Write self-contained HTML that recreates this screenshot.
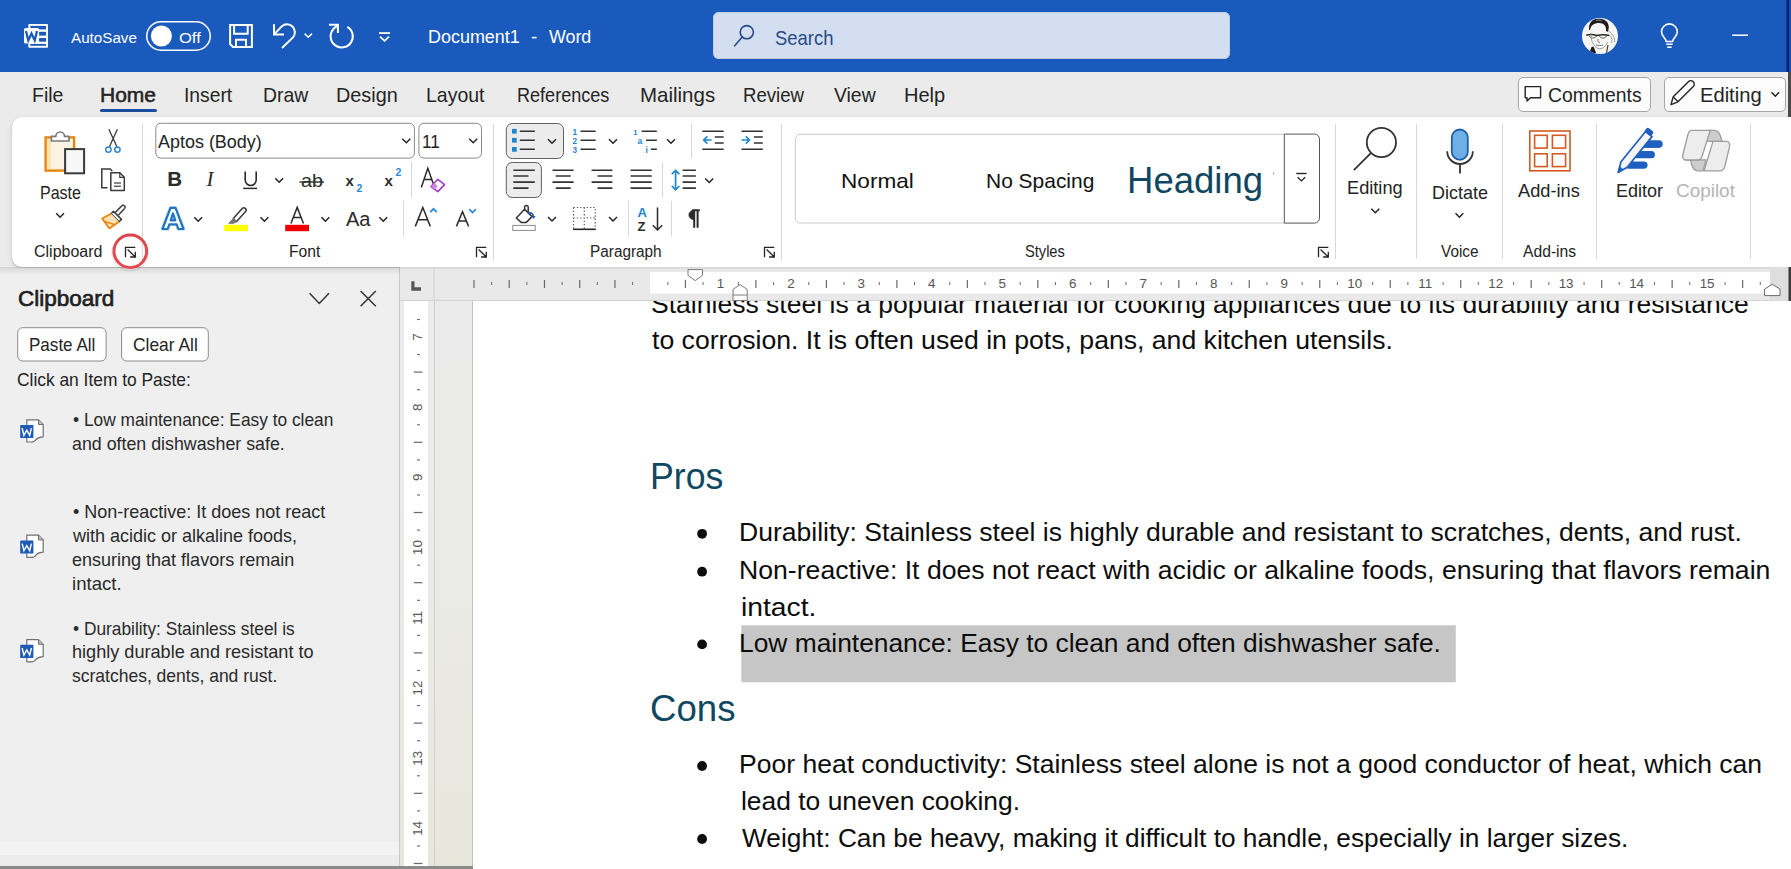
<!DOCTYPE html>
<html><head><meta charset="utf-8">
<style>
html,body{margin:0;padding:0;width:1791px;height:869px;overflow:hidden;background:#ebebeb;font-family:"Liberation Sans",sans-serif;}
.a{position:absolute;}
.t{position:absolute;white-space:nowrap;transform-origin:0 0;z-index:5;}
svg{position:absolute;overflow:visible;}
</style></head><body>
<!-- title bar -->
<div class="a" style="left:0;top:0;width:1791px;height:72px;background:#1a5abd;"></div>
<!-- tab row -->
<div class="a" style="left:0;top:72px;width:1791px;height:45px;background:#ebebeb;"></div>
<div class="a" style="left:1788px;top:72px;width:3px;height:45px;background:#4a4a4a;"></div>
<div class="a" style="left:100px;top:108.8px;width:57px;height:3.2px;border-radius:2px;background:#1a4fa0;"></div>
<!-- comments/editing buttons -->
<div class="a" style="left:1517.5px;top:76.5px;width:131px;height:33px;border:1px solid #a6a6a6;border-radius:5px;background:#fcfcfc;"></div>
<div class="a" style="left:1663.5px;top:76.5px;width:120px;height:33px;border:1px solid #a6a6a6;border-radius:5px;background:#fcfcfc;"></div>
<!-- ribbon -->
<div class="a" style="left:12px;top:117px;width:1779px;height:150px;border-radius:10px 0 0 10px;background:#fff;box-shadow:0 1px 2px rgba(0,0,0,0.16),0 2px 6px rgba(0,0,0,0.10);"></div>
<!-- search box -->
<div class="a" style="left:713px;top:12px;width:517px;height:47px;border-radius:6px;background:#d3dff0;box-shadow:inset 0 0 0 1px #bfcde4;"></div>
<!-- clipboard pane -->
<div class="a" style="left:0;top:268px;width:399px;height:601px;background:#efefef;"></div>
<div class="a" style="left:399px;top:268px;width:1px;height:601px;background:#c9c9c9;"></div>
<div class="a" style="left:0;top:267px;width:400px;height:8px;background:linear-gradient(rgba(0,0,0,0.10),rgba(0,0,0,0));"></div>
<div class="a" style="left:0;top:842px;width:399px;height:13px;background:#f3f3f3;"></div>
<div class="a" style="left:0;top:855px;width:399px;height:11px;background:#ececec;"></div>
<!-- document area -->
<div class="a" style="left:400px;top:268px;width:1391px;height:601px;background:linear-gradient(#ebebeb 0%,#ebebea 35%,#e8e7dc 100%);"></div>
<div class="a" style="left:472px;top:301px;width:1px;height:568px;background:#c4c4bc;"></div>
<div class="a" style="left:473px;top:301px;width:1318px;height:568px;background:#fff;"></div>
<div class="a" style="left:404px;top:301px;width:24px;height:565px;background:#fff;"></div>
<div class="a" style="left:433.5px;top:268px;width:1px;height:598px;background:#cfcfcf;"></div>
<div class="a" style="left:0;top:866px;width:473px;height:3px;background:#8a8a8a;"></div>
<span class="t" style="left:71.20px;top:29.68px;font-size:15.26px;line-height:15.26px;color:#ffffff;font-weight:400;transform:scaleX(0.9970);">AutoSave</span>
<span class="t" style="left:179.30px;top:29.68px;font-size:15.26px;line-height:15.26px;color:#ffffff;font-weight:400;transform:scaleX(1.0850);">Off</span>
<span class="t" style="left:428.04px;top:27.92px;font-size:18.75px;line-height:18.75px;color:#ffffff;font-weight:400;transform:scaleX(0.9574);">Document1</span>
<span class="t" style="left:531.00px;top:27.92px;font-size:18.75px;line-height:18.75px;color:#ffffff;font-weight:400;transform:scaleX(1.0000);">-</span>
<span class="t" style="left:549.10px;top:27.92px;font-size:18.75px;line-height:18.75px;color:#ffffff;font-weight:400;transform:scaleX(0.9500);">Word</span>
<span class="t" style="left:774.79px;top:27.79px;font-size:20.20px;line-height:20.20px;color:#2a4a86;font-weight:400;transform:scaleX(0.9129);">Search</span>
<span class="t" style="left:31.55px;top:85.45px;font-size:20.49px;line-height:20.49px;color:#242424;font-weight:400;transform:scaleX(0.9516);">File</span>
<span class="t" style="left:99.88px;top:85.45px;font-size:20.49px;line-height:20.49px;color:#242424;font-weight:400;transform:scaleX(1.0245);-webkit-text-stroke:0.55px #242424;">Home</span>
<span class="t" style="left:184.12px;top:85.45px;font-size:20.49px;line-height:20.49px;color:#242424;font-weight:400;transform:scaleX(0.9408);">Insert</span>
<span class="t" style="left:262.66px;top:85.45px;font-size:20.49px;line-height:20.49px;color:#242424;font-weight:400;transform:scaleX(0.9447);">Draw</span>
<span class="t" style="left:336.03px;top:85.45px;font-size:20.49px;line-height:20.49px;color:#242424;font-weight:400;transform:scaleX(0.9677);">Design</span>
<span class="t" style="left:426.05px;top:85.45px;font-size:20.49px;line-height:20.49px;color:#242424;font-weight:400;transform:scaleX(0.9508);">Layout</span>
<span class="t" style="left:516.72px;top:85.45px;font-size:20.49px;line-height:20.49px;color:#242424;font-weight:400;transform:scaleX(0.8816);">References</span>
<span class="t" style="left:640.00px;top:85.45px;font-size:20.49px;line-height:20.49px;color:#242424;font-weight:400;transform:scaleX(1.0000);">Mailings</span>
<span class="t" style="left:743.09px;top:85.45px;font-size:20.49px;line-height:20.49px;color:#242424;font-weight:400;transform:scaleX(0.9091);">Review</span>
<span class="t" style="left:833.80px;top:85.45px;font-size:20.49px;line-height:20.49px;color:#242424;font-weight:400;transform:scaleX(0.9455);">View</span>
<span class="t" style="left:903.92px;top:85.45px;font-size:20.49px;line-height:20.49px;color:#242424;font-weight:400;transform:scaleX(0.9780);">Help</span>
<span class="t" style="left:1547.96px;top:85.35px;font-size:20.49px;line-height:20.49px;color:#242424;font-weight:400;transform:scaleX(0.9449);">Comments</span>
<span class="t" style="left:1700.02px;top:85.35px;font-size:20.49px;line-height:20.49px;color:#242424;font-weight:400;transform:scaleX(0.9836);">Editing</span>
<span class="t" style="left:40.42px;top:184.39px;font-size:18.31px;line-height:18.31px;color:#242424;font-weight:400;transform:scaleX(0.8756);">Paste</span>
<span class="t" style="left:33.79px;top:243.59px;font-size:15.84px;line-height:15.84px;color:#242424;font-weight:400;transform:scaleX(1.0091);">Clipboard</span>
<span class="t" style="left:158.30px;top:133.05px;font-size:18.60px;line-height:18.60px;color:#242424;font-weight:400;transform:scaleX(0.9654);">Aptos (Body)</span>
<span class="t" style="left:422.07px;top:133.05px;font-size:18.60px;line-height:18.60px;color:#242424;font-weight:400;transform:scaleX(0.9278);">11</span>
<span class="t" style="left:289.31px;top:243.59px;font-size:15.84px;line-height:15.84px;color:#242424;font-weight:400;transform:scaleX(0.9903);">Font</span>
<span class="t" style="left:589.53px;top:243.59px;font-size:15.84px;line-height:15.84px;color:#242424;font-weight:400;transform:scaleX(0.9694);">Paragraph</span>
<span class="t" style="left:841.37px;top:170.62px;font-size:20.06px;line-height:20.06px;color:#111;font-weight:400;transform:scaleX(1.1270);">Normal</span>
<span class="t" style="left:985.95px;top:170.62px;font-size:20.06px;line-height:20.06px;color:#111;font-weight:400;transform:scaleX(1.0451);">No Spacing</span>
<span class="t" style="left:1127.10px;top:161.60px;font-size:37.79px;line-height:37.79px;color:#0f4761;font-weight:400;transform:scaleX(0.9669);">Heading</span>
<span class="t" style="left:1025.48px;top:243.59px;font-size:15.84px;line-height:15.84px;color:#242424;font-weight:400;transform:scaleX(0.9238);">Styles</span>
<span class="t" style="left:1347.49px;top:179.34px;font-size:18.02px;line-height:18.02px;color:#242424;font-weight:400;transform:scaleX(1.0094);">Editing</span>
<span class="t" style="left:1432.02px;top:184.19px;font-size:18.31px;line-height:18.31px;color:#242424;font-weight:400;transform:scaleX(0.9818);">Dictate</span>
<span class="t" style="left:1441.20px;top:243.59px;font-size:15.84px;line-height:15.84px;color:#242424;font-weight:400;transform:scaleX(0.9684);">Voice</span>
<span class="t" style="left:1518.40px;top:181.59px;font-size:18.31px;line-height:18.31px;color:#242424;font-weight:400;transform:scaleX(0.9968);">Add-ins</span>
<span class="t" style="left:1522.50px;top:243.59px;font-size:15.84px;line-height:15.84px;color:#242424;font-weight:400;transform:scaleX(0.9906);">Add-ins</span>
<span class="t" style="left:1616.01px;top:181.59px;font-size:18.31px;line-height:18.31px;color:#242424;font-weight:400;transform:scaleX(0.9851);">Editor</span>
<span class="t" style="left:1676.47px;top:181.59px;font-size:18.31px;line-height:18.31px;color:#b4b4b4;font-weight:400;transform:scaleX(1.0339);">Copilot</span>
<span class="t" style="left:18.00px;top:286.80px;font-size:22.67px;line-height:22.67px;color:#1f1f1f;font-weight:400;transform:scaleX(0.9927);-webkit-text-stroke:0.7px #1f1f1f;">Clipboard</span>
<span class="t" style="left:29.10px;top:334.98px;font-size:19.04px;line-height:19.04px;color:#242424;font-weight:400;transform:scaleX(0.8958);">Paste All</span>
<span class="t" style="left:132.69px;top:334.98px;font-size:19.04px;line-height:19.04px;color:#242424;font-weight:400;transform:scaleX(0.9145);">Clear All</span>
<span class="t" style="left:16.67px;top:370.85px;font-size:18.60px;line-height:18.60px;color:#242424;font-weight:400;transform:scaleX(0.9342);">Click an Item to Paste:</span>
<span class="t" style="left:73.00px;top:411.25px;font-size:18.60px;line-height:18.60px;color:#2a2a2a;font-weight:400;transform:scaleX(0.9319);">• Low maintenance: Easy to clean</span>
<span class="t" style="left:72.04px;top:434.85px;font-size:18.60px;line-height:18.60px;color:#2a2a2a;font-weight:400;transform:scaleX(0.9573);">and often dishwasher safe.</span>
<span class="t" style="left:73.00px;top:503.05px;font-size:18.60px;line-height:18.60px;color:#2a2a2a;font-weight:400;transform:scaleX(0.9678);">• Non-reactive: It does not react</span>
<span class="t" style="left:73.00px;top:526.85px;font-size:18.60px;line-height:18.60px;color:#2a2a2a;font-weight:400;transform:scaleX(0.9674);">with acidic or alkaline foods,</span>
<span class="t" style="left:72.03px;top:550.85px;font-size:18.60px;line-height:18.60px;color:#2a2a2a;font-weight:400;transform:scaleX(0.9684);">ensuring that flavors remain</span>
<span class="t" style="left:72.00px;top:574.65px;font-size:18.60px;line-height:18.60px;color:#2a2a2a;font-weight:400;transform:scaleX(1.0000);">intact.</span>
<span class="t" style="left:73.00px;top:619.55px;font-size:18.60px;line-height:18.60px;color:#2a2a2a;font-weight:400;transform:scaleX(0.9315);">• Durability: Stainless steel is</span>
<span class="t" style="left:72.03px;top:643.35px;font-size:18.60px;line-height:18.60px;color:#2a2a2a;font-weight:400;transform:scaleX(0.9737);">highly durable and resistant to</span>
<span class="t" style="left:72.06px;top:667.05px;font-size:18.60px;line-height:18.60px;color:#2a2a2a;font-weight:400;transform:scaleX(0.9412);">scratches, dents, and rust.</span>
<span class="t" style="left:650.54px;top:291.93px;font-size:25.00px;line-height:25.00px;color:#0d0d0d;font-weight:400;transform:scaleX(1.0617);">Stainless steel is a popular material for cooking appliances due to its durability and resistance</span>
<span class="t" style="left:651.60px;top:328.13px;font-size:25.00px;line-height:25.00px;color:#0d0d0d;font-weight:400;transform:scaleX(1.0641);">to corrosion. It is often used in pots, pans, and kitchen utensils.</span>
<span class="t" style="left:649.55px;top:459.23px;font-size:36.34px;line-height:36.34px;color:#0f4761;font-weight:400;transform:scaleX(0.9817);">Pros</span>
<span class="t" style="left:739.18px;top:520.13px;font-size:25.00px;line-height:25.00px;color:#0d0d0d;font-weight:400;transform:scaleX(1.0612);">Durability: Stainless steel is highly durable and resistant to scratches, dents, and rust.</span>
<span class="t" style="left:739.17px;top:558.03px;font-size:25.00px;line-height:25.00px;color:#0d0d0d;font-weight:400;transform:scaleX(1.0649);">Non-reactive: It does not react with acidic or alkaline foods, ensuring that flavors remain</span>
<span class="t" style="left:740.57px;top:594.83px;font-size:25.00px;line-height:25.00px;color:#0d0d0d;font-weight:400;transform:scaleX(1.1313);">intact.</span>
<span class="t" style="left:739.19px;top:631.33px;font-size:25.00px;line-height:25.00px;color:#0d0d0d;font-weight:400;transform:scaleX(1.0544);">Low maintenance: Easy to clean and often dishwasher safe.</span>
<span class="t" style="left:650.29px;top:690.93px;font-size:36.34px;line-height:36.34px;color:#0f4761;font-weight:400;transform:scaleX(1.0073);">Cons</span>
<span class="t" style="left:739.48px;top:752.33px;font-size:25.00px;line-height:25.00px;color:#0d0d0d;font-weight:400;transform:scaleX(1.0608);">Poor heat conductivity: Stainless steel alone is not a good conductor of heat, which can</span>
<span class="t" style="left:740.54px;top:789.13px;font-size:25.00px;line-height:25.00px;color:#0d0d0d;font-weight:400;transform:scaleX(1.0567);">lead to uneven cooking.</span>
<span class="t" style="left:741.60px;top:826.03px;font-size:25.00px;line-height:25.00px;color:#0d0d0d;font-weight:400;transform:scaleX(1.0508);">Weight: Can be heavy, making it difficult to handle, especially in larger sizes.</span>
<svg width="1791" height="869" style="left:0;top:0;z-index:4" viewBox="0 0 1791 869" fill="none" stroke-linecap="butt">
<!-- ===== TITLE BAR ===== -->
<!-- word logo -->
<g>
<rect x="28.3" y="23.9" width="19.7" height="23.9" rx="1" fill="#fff"/>
<rect x="30.3" y="25.9" width="15.7" height="3.5" fill="#1a5abd"/>
<rect x="30.3" y="31.8" width="15.7" height="3.8" fill="#1a5abd"/>
<rect x="30.3" y="38" width="15.7" height="3.7" fill="#1a5abd"/>
<rect x="30.3" y="43.9" width="15.7" height="1.9" fill="#1a5abd"/>
<rect x="24" y="27.9" width="15.1" height="15.7" rx="1.6" fill="#fff"/>
<polyline points="26,31 28.3,40.4 31.5,33.5 34.7,40.4 37,31" stroke="#1a5abd" stroke-width="2.3" stroke-linejoin="miter"/>
</g>
<!-- toggle -->
<rect x="146.75" y="21.75" width="63.5" height="28.5" rx="14.25" stroke="#fff" stroke-width="1.5"/>
<circle cx="161.4" cy="36" r="10.5" fill="#fff"/>
<!-- save -->
<path d="M230.1,25 H251.9 V46.9 H233 L230.1,44 Z" stroke="#fff" stroke-width="2"/>
<path d="M234.1,25 V33.7 H247.7 V25" stroke="#fff" stroke-width="2"/>
<path d="M236,46.9 V39.8 H246 V46.9" stroke="#fff" stroke-width="2"/>
<!-- undo -->
<path d="M274,24.3 V34.5 H284" stroke="#fff" stroke-width="2"/>
<path d="M274.6,33.9 L281.7,26.4 A7.9,7.9 0 0 1 293,37.4 L282,48" stroke="#fff" stroke-width="2"/>
<polyline points="304.6,33.6 308.3,37.3 312,33.6" stroke="#fff" stroke-width="1.5"/>
<!-- redo -->
<path d="M329,24.75 H337.9 V33" stroke="#fff" stroke-width="2"/>
<path d="M337.2,25.5 L333.4,29 A11.1,11.1 0 1 0 347.4,26.8" stroke="#fff" stroke-width="2"/>
<!-- customize -->
<rect x="379" y="32.2" width="11" height="1.8" fill="#fff"/>
<polyline points="380,36.6 384.5,40.8 389,36.6" stroke="#fff" stroke-width="1.8"/>
<!-- search magnifier -->
<circle cx="746.8" cy="32.2" r="6.6" stroke="#2a4a86" stroke-width="1.6"/>
<line x1="742.2" y1="37" x2="734.3" y2="46.3" stroke="#2a4a86" stroke-width="1.6"/>
<!-- avatar -->
<g>
<circle cx="1600" cy="36" r="18" fill="#f6f6f4"/>
<clipPath id="av"><circle cx="1600" cy="36" r="18"/></clipPath>
<g clip-path="url(#av)">
<path d="M1589,30 C1588.5,23 1592,19 1598,18.8 C1604,18.6 1608.5,21 1608.8,27 L1608.2,32 L1606,31 C1606.5,26 1604,23 1599,23 C1594,23 1591,25 1590,30 Z" fill="#1e1e1e"/>
<path d="M1596,20.5 C1598,20 1600,20 1601.5,21" stroke="#777" stroke-width="1.2"/>
<path d="M1586.2,35.2 C1590,34 1594,34.5 1597,35.5 C1600,34.6 1605,34.4 1609.5,35.4" stroke="#2a2a2a" stroke-width="1.5"/>
<path d="M1589.5,36 C1590,38.5 1595,38.8 1596.5,36 M1599.5,36 C1600,38.8 1605.5,38.8 1606.5,36" stroke="#555" stroke-width="0.9"/>
<path d="M1598,39 C1597.5,41 1598,42.5 1600,42.5 M1596,45 C1598,45.6 1601,45.6 1603,45" stroke="#666" stroke-width="0.9"/>
<path d="M1591,33 C1590.5,40 1593,46 1598,48.5 C1602,49.5 1606,47 1607.5,42" stroke="#8a8a8a" stroke-width="0.8"/>
<path d="M1609,31.5 C1613,34 1615,38 1614.5,42 M1610.5,36 C1612,38 1612.5,41 1611,43" stroke="#888" stroke-width="0.8"/>
<path d="M1591.5,47 L1593.5,46.5 L1596,52.5 L1592.5,55 L1589,54 Z" fill="#1e1e1e"/>
<path d="M1608,45 L1606.5,53" stroke="#333" stroke-width="1.2"/>
</g>
</g>
<!-- lightbulb -->
<path d="M1666.2,41.5 C1666,38.5 1661.5,36.5 1661.5,31.8 A7.9,7.9 0 0 1 1677.3,31.8 C1677.3,36.5 1672.8,38.5 1672.6,41.5 Z" stroke="#fff" stroke-width="1.6"/>
<line x1="1666.2" y1="44.2" x2="1672.6" y2="44.2" stroke="#fff" stroke-width="1.5"/>
<line x1="1667.2" y1="47.2" x2="1671.6" y2="47.2" stroke="#fff" stroke-width="1.6"/>
<!-- minimize -->
<line x1="1732.2" y1="35.2" x2="1748" y2="35.2" stroke="#fff" stroke-width="1.5"/>
<rect x="1786.5" y="0" width="2.5" height="72" fill="#0c2372"/><rect x="1789" y="0" width="2" height="72" fill="#1a4aa8"/>
<!-- ===== TAB ROW ===== -->
<!-- comments icon -->
<path d="M1525.2,86.6 H1540.6 V97.8 H1530.5 L1527,101 V97.8 H1525.2 Z" stroke="#242424" stroke-width="1.4" stroke-linejoin="round"/>
<!-- pencil -->
<path d="M1671,104.6 L1673.2,96.8 L1688.4,81.8 A2.4,2.4 0 0 1 1693.3,86.6 L1678,101.8 Z" stroke="#242424" stroke-width="1.4" stroke-linejoin="round"/>
<line x1="1673.4" y1="97" x2="1677.8" y2="101.5" stroke="#242424" stroke-width="1.3"/>
<polyline points="1771.5,92.3 1775.3,96.2 1779.1,92.3" stroke="#242424" stroke-width="1.5"/>
</svg>
<svg width="1791" height="869" style="left:0;top:0;z-index:4" viewBox="0 0 1791 869" fill="none">
<!-- ===== CLIPBOARD GROUP ===== -->
<rect x="45.6" y="137.4" width="28.5" height="33.2" fill="#fdf3e3" stroke="#e8870e" stroke-width="2.4"/>
<rect x="47" y="139" width="4" height="30" fill="#fbe3b6"/>
<path d="M51.4,141 V136.4 H55.8 A4.4,4.4 0 0 1 64.6,136.4 H69 V141 Z" fill="#fff" stroke="#7a7a7a" stroke-width="1.7" stroke-linejoin="round"/>
<rect x="65.1" y="149.1" width="19" height="24.2" fill="#f7f7f7" stroke="#3a3a3a" stroke-width="2"/>
<!-- chevron paste -->
<polyline points="56.2,213.3 60.1,217.3 64,213.3" stroke="#242424" stroke-width="1.5"/>
<!-- scissors -->
<path d="M108.9,129.2 L116.9,146.8 M117.4,129.2 L109.4,146.8" stroke="#3a3a3a" stroke-width="1.3"/>
<circle cx="108.4" cy="149.6" r="2.7" stroke="#2b87d3" stroke-width="1.5"/>
<circle cx="117.4" cy="149.6" r="2.7" stroke="#2b87d3" stroke-width="1.5"/>
<!-- copy -->
<path d="M107.5,187.8 H101.8 V169 H110.2 L112.3,171" stroke="#3a3a3a" stroke-width="1.5"/>
<path d="M110.8,172.8 H119.8 L124.3,177.3 V190.6 H110.8 Z" fill="#fff" stroke="#3a3a3a" stroke-width="1.5" stroke-linejoin="round"/>
<path d="M119.8,172.8 V177.3 H124.3" stroke="#3a3a3a" stroke-width="1.2"/>
<line x1="114" y1="183" x2="121" y2="183" stroke="#3a3a3a" stroke-width="1.2"/>
<line x1="114" y1="186.2" x2="121" y2="186.2" stroke="#3a3a3a" stroke-width="1.2"/>
<!-- format painter -->
<path d="M124.6,208.6 L118.5,215 M121.6,206 L115.5,212.3" stroke="#3a3a3a" stroke-width="1.5"/>
<path d="M124.6,208.6 A1.9,1.9 0 0 0 121.6,206" stroke="#3a3a3a" stroke-width="1.5"/>
<path d="M113.5,211.4 L121.5,219.4 L119,221.7 L111.1,213.7 Z" stroke="#3a3a3a" stroke-width="1.5" stroke-linejoin="round"/>
<path d="M111.1,213.7 L102.2,218.5 L109.3,228.4 L119,221.7" fill="#fbe3b6" stroke="#e8870e" stroke-width="1.8" stroke-linejoin="round"/>
<line x1="104.7" y1="221.6" x2="114.3" y2="224.6" stroke="#e8870e" stroke-width="1.6"/>
<!-- launchers -->
<g stroke="#242424" stroke-width="1.3">
<path d="M125.5,257.2 V247.4 H135.3 M127.6,249.5 L135.3,257 M135.3,251.8 V257 H130.1"/>
<path d="M476.5,257.2 V247.4 H486.3 M478.6,249.5 L486.3,257 M486.3,251.8 V257 H481.1"/>
<path d="M764.5,257.2 V247.4 H774.3 M766.6,249.5 L774.3,257 M774.3,251.8 V257 H769.1"/>
<path d="M1318.5,257.2 V247.4 H1328.3 M1320.6,249.5 L1328.3,257 M1328.3,251.8 V257 H1323.1"/>
</g>
<!-- separators -->
<g stroke="#d9d9d9" stroke-width="1">
<line x1="142.5" y1="124" x2="142.5" y2="261"/>
<line x1="493.5" y1="124" x2="493.5" y2="261"/>
<line x1="781.5" y1="124" x2="781.5" y2="261"/>
<line x1="1335.5" y1="124" x2="1335.5" y2="259"/>
<line x1="1416.5" y1="124" x2="1416.5" y2="259"/>
<line x1="1502.5" y1="124" x2="1502.5" y2="259"/>
<line x1="1596.5" y1="124" x2="1596.5" y2="259"/>
<line x1="1750.5" y1="124" x2="1750.5" y2="259"/>
<line x1="411.5" y1="162" x2="411.5" y2="197.5"/>
<line x1="403.5" y1="201" x2="403.5" y2="236.5"/>
<line x1="691.5" y1="124" x2="691.5" y2="158"/>
<line x1="662.5" y1="162.5" x2="662.5" y2="197.5"/>
<line x1="628.5" y1="201" x2="628.5" y2="236.5"/>
<line x1="671.5" y1="201" x2="671.5" y2="236.5"/>
</g>
<!-- ===== FONT GROUP ===== -->
<rect x="155.8" y="123.3" width="258.6" height="34.8" rx="5" fill="#fff" stroke="#8a8a8a" stroke-width="1"/>
<rect x="418.9" y="123.3" width="62.6" height="34.8" rx="5" fill="#fff" stroke="#8a8a8a" stroke-width="1"/>
<polyline points="402.3,138.7 406.3,142.7 410.3,138.7" stroke="#242424" stroke-width="1.5"/>
<polyline points="469.2,138.7 473.2,142.7 477.2,138.7" stroke="#242424" stroke-width="1.5"/>
<!-- row2 chevrons -->
<g stroke="#242424" stroke-width="1.5">
<polyline points="275.3,178.3 279.2,182.3 283.1,178.3"/>
<polyline points="194.3,217.3 198.2,221.3 202.1,217.3"/>
<polyline points="260.5,217.3 264.4,221.3 268.3,217.3"/>
<polyline points="321.5,217.3 325.4,221.3 329.3,217.3"/>
<polyline points="379.4,217.3 383.3,221.3 387.2,217.3"/>
</g>
<!-- B I U -->
<text x="167.3" y="186" font-family="Liberation Sans" font-weight="700" font-size="20.5" fill="#2b2b2b">B</text>
<text x="206.5" y="186" font-family="Liberation Serif" font-style="italic" font-size="21" fill="#2b2b2b">I</text>
<path d="M245.2,171.5 V180 A5.5,5.5 0 0 0 256.2,180 V171.5" stroke="#2b2b2b" stroke-width="1.6"/>
<line x1="243.2" y1="188.4" x2="257" y2="188.4" stroke="#2b2b2b" stroke-width="1.5"/>
<!-- ab strike -->
<text x="301" y="187" font-family="Liberation Sans" font-size="19" fill="#2b2b2b" textLength="22" lengthAdjust="spacingAndGlyphs">ab</text>
<line x1="299.5" y1="182" x2="324" y2="182" stroke="#2b2b2b" stroke-width="1.4"/>
<!-- sub/sup -->
<text x="345.5" y="185.8" font-family="Liberation Sans" font-weight="700" font-size="15" fill="#2b2b2b">x</text>
<text x="356.5" y="191.8" font-family="Liberation Sans" font-weight="700" font-size="10.5" fill="#2b87d3">2</text>
<text x="384.5" y="185.8" font-family="Liberation Sans" font-weight="700" font-size="15" fill="#2b2b2b">x</text>
<text x="395.5" y="175.8" font-family="Liberation Sans" font-weight="700" font-size="10.5" fill="#2b87d3">2</text>
<!-- clear formatting -->
<path d="M421.3,187.5 L427.8,168.3 L434.3,186.5 M424,179.5 H432" stroke="#2b2b2b" stroke-width="1.5"/>
<path d="M431,186.5 L437.8,179.3 L444.6,184.6 L437.8,191.6 Z" fill="#fff" stroke="#a23bc4" stroke-width="1.6" stroke-linejoin="round"/>
<path d="M431,186.5 L434.3,183 L437.9,186.2 L434.5,189.4 Z" fill="#c88ad9"/>
<!-- text effects -->
<path d="M162.5,229 L170.5,207.8 H175.5 L183.5,229 H178.3 L176.7,224.3 H169.3 L167.7,229 Z M170.7,220.3 H175.3 L173,213.4 Z" stroke="#a9d0f2" stroke-width="3.6" stroke-linejoin="round" opacity="0.7"/>
<path d="M162.5,229 L170.5,207.8 H175.5 L183.5,229 H178.3 L176.7,224.3 H169.3 L167.7,229 Z M170.7,220.3 H175.3 L173,213.4 Z" fill="#fff" fill-rule="evenodd" stroke="#1f74c4" stroke-width="2.2" stroke-linejoin="round"/>
<!-- highlighter -->
<path d="M233.3,218.6 L242.2,208.6 A2.2,2.2 0 0 1 245.6,211.5 L236.4,221.8 Z" stroke="#3a3a3a" stroke-width="1.5" stroke-linejoin="round"/>
<path d="M233.3,218.6 L228.8,223.3 H233.6 L236.4,221.8 Z" fill="#777" stroke="#777" stroke-width="1"/>
<rect x="224.2" y="224.8" width="23.8" height="6.4" fill="#ffff00"/>
<!-- font color -->
<path d="M290.9,223.4 L297.2,207.4 L303.5,223.4 M293.2,217.6 H301.2" stroke="#2b2b2b" stroke-width="1.5"/>
<rect x="285.2" y="224.8" width="23.8" height="6.4" fill="#ee0000"/>
<!-- Aa -->
<text x="346" y="226.4" font-family="Liberation Sans" font-size="19.5" fill="#2b2b2b" textLength="24.5" lengthAdjust="spacingAndGlyphs">Aa</text>
<!-- grow/shrink -->
<path d="M415.3,226.4 L422.8,207.5 L430.3,226.4 M418.1,219.8 H427.5" stroke="#2b2b2b" stroke-width="1.5"/>
<polyline points="430.3,212.2 433.5,208.8 436.7,212.2" stroke="#2b87d3" stroke-width="1.7"/>
<path d="M456.4,226.4 L462.5,211.7 L468.6,226.4 M458.8,221.1 H466.2" stroke="#2b2b2b" stroke-width="1.5"/>
<polyline points="469.2,209.2 472.5,212.5 475.8,209.2" stroke="#2b87d3" stroke-width="1.7"/>
</svg>
<svg width="1791" height="869" style="left:0;top:0;z-index:4" viewBox="0 0 1791 869" fill="none">
<!-- ===== PARAGRAPH GROUP ===== -->
<rect x="506.3" y="123.5" width="57.2" height="35" rx="6" fill="#ececec" stroke="#616161" stroke-width="1"/>
<rect x="506.3" y="162.5" width="35.1" height="35" rx="6" fill="#ececec" stroke="#616161" stroke-width="1"/>
<g fill="#1f87d0">
<rect x="512" y="128.9" width="4.7" height="4.7"/>
<rect x="512" y="137.9" width="4.7" height="4.7"/>
<rect x="512" y="147" width="4.7" height="4.7"/>
</g>
<g stroke="#333" stroke-width="1.6">
<path d="M519.8,131.2 H534.8 M519.8,140.2 H534.8 M519.8,149.3 H534.8"/>
<path d="M580.5,131.2 H595.7 M580.5,140.2 H595.7 M580.5,149.3 H595.7"/>
<path d="M641.6,131.2 H656.8 M646,140.2 H656.8 M650.8,149.3 H656.8"/>
<path d="M702.3,131.2 H723.7 M714.8,137 H723.7 M714.8,143 H723.7 M702.3,149.3 H723.7"/>
<path d="M741.5,131.2 H762.8 M753.9,137 H762.8 M753.9,143 H762.8 M741.5,149.3 H762.8"/>
<path d="M513.3,170.2 H534.8 M513.3,176 H528.5 M513.3,182.1 H534.8 M513.3,188.1 H528.5"/>
<path d="M552.5,170.2 H573.6 M555.7,176 H570.7 M552.5,182.1 H573.6 M555.7,188.1 H570.7"/>
<path d="M591.6,170.2 H612.4 M597.5,176 H612.4 M591.6,182.1 H612.4 M597.5,188.1 H612.4"/>
<path d="M630.5,170.2 H651.7 M630.5,176 H651.7 M630.5,182.1 H651.7 M630.5,188.1 H651.7"/>
<path d="M682.6,170.2 H695.9 M682.6,176 H695.9 M682.6,182.1 H695.9 M682.6,188.1 H695.9"/>
</g>
<g font-family="Liberation Sans" font-weight="700" fill="#1f87d0">
<text x="572.6" y="134.8" font-size="8.2">1</text>
<text x="572.6" y="143.9" font-size="8.2">2</text>
<text x="572.6" y="152.9" font-size="8.2">3</text>
<text x="633.2" y="134.8" font-size="7.5">1</text>
<text x="637.6" y="144.2" font-size="8.5">a</text>
<text x="645.4" y="152.7" font-size="8.5">i</text>
</g>
<g stroke="#1f87d0" stroke-width="1.7" fill="none">
<path d="M711.6,140 H704 M707.4,136.3 L703.7,140 L707.4,143.7"/>
<path d="M741.5,140 H749.2 M745.8,136.3 L749.5,140 L745.8,143.7"/>
<path d="M675.6,170.5 V189.8 M671.8,174.2 L675.6,170.4 L679.4,174.2 M671.8,186 L675.6,189.8 L679.4,186"/>
</g>
<g stroke="#242424" stroke-width="1.5">
<polyline points="548,139.2 552,143.2 556,139.2"/>
<polyline points="609,139.2 613,143.2 617,139.2"/>
<polyline points="667,139.2 671,143.2 675,139.2"/>
<polyline points="705.2,178.5 709.2,182.5 713.2,178.5"/>
<polyline points="548,217 552,221 556,217"/>
<polyline points="609,217 613,221 617,217"/>
</g>
<!-- shading -->
<rect x="512.8" y="225.4" width="22.4" height="5" fill="#fff" stroke="#8a8a8a" stroke-width="1"/>
<path d="M516.3,218 L524.6,209.2 L532,216.6 L526.3,222.4 L521.2,222.4 Z" fill="#fff" stroke="#333" stroke-width="1.5" stroke-linejoin="round"/>
<path d="M524.6,209.2 V207.2 A1.8,1.8 0 0 1 528.2,207.2 V213" stroke="#333" stroke-width="1.5"/>
<path d="M528,213.5 C531,212 533,213 533.5,217" stroke="#1f5fa8" stroke-width="1.8"/>
<path d="M531.5,216 L533.6,219 L535.6,216" fill="#1f5fa8"/>
<!-- borders -->
<path d="M573.5,207.5 H595.2 V228.5 M573.5,207.5 V228.5 M584.3,207.5 V228.5 M573.5,218 H595.2" stroke="#555" stroke-width="1.2" stroke-dasharray="1.3,2"/>
<line x1="573" y1="229.3" x2="595.8" y2="229.3" stroke="#242424" stroke-width="1.6"/>
<!-- sort -->
<text x="637.4" y="217.3" font-family="Liberation Sans" font-weight="700" font-size="13" fill="#1f87d0">A</text>
<text x="637.6" y="230.6" font-family="Liberation Sans" font-weight="700" font-size="13" fill="#2b2b2b">Z</text>
<path d="M657.5,207.5 V230 M652.8,225.3 L657.5,230 L662.2,225.3" stroke="#2b2b2b" stroke-width="1.5"/>
<!-- pilcrow -->
<path d="M692,210.3 H699.8 M694.2,210.3 V227.7 M697.6,210.3 V227.7" stroke="#2b2b2b" stroke-width="2"/>
<path d="M694,210.3 A5,4.6 0 0 0 694,219.5 Z" fill="#2b2b2b" stroke="#2b2b2b" stroke-width="1"/>
<!-- ===== STYLES ===== -->
<path d="M1284.3,134.3 H800 A5,5 0 0 0 795.3,139.3 V218 A5,5 0 0 0 800.3,223 H1284.3" stroke="#c9c9c9" stroke-width="1"/>
<path d="M1284.3,134.1 H1314.5 A5,5 0 0 1 1319.5,139.1 V218.1 A5,5 0 0 1 1314.5,223.1 H1284.3 Z" fill="#fff" stroke="#555" stroke-width="1"/>
<line x1="1296.3" y1="173.5" x2="1306.5" y2="173.5" stroke="#242424" stroke-width="1.4"/>
<polyline points="1297.6,177.3 1301.4,180.9 1305.2,177.3" stroke="#242424" stroke-width="1.4"/>
<line x1="1273.5" y1="172" x2="1273.5" y2="175" stroke="#aaa" stroke-width="0.8"/>
<!-- ===== EDITING / VOICE / ADDINS ===== -->
<circle cx="1381.4" cy="142.5" r="14.6" stroke="#333" stroke-width="1.8"/>
<line x1="1370.6" y1="153.4" x2="1353.8" y2="170.1" stroke="#333" stroke-width="1.8"/>
<polyline points="1371.3,208.8 1375.3,212.8 1379.3,208.8" stroke="#242424" stroke-width="1.5"/>
<rect x="1451.8" y="129.5" width="16" height="30.3" rx="8" fill="#6eb0e6" stroke="#1f5fa8" stroke-width="1.8"/>
<path d="M1447.2,151.2 A12.8,12.8 0 0 0 1472.8,151.2 M1460,164.4 V173.4" stroke="#333" stroke-width="1.8"/>
<polyline points="1455.5,213.3 1459.4,217.3 1463.3,213.3" stroke="#242424" stroke-width="1.5"/>
<rect x="1529.8" y="131" width="40.2" height="39.8" stroke="#d35a22" stroke-width="1.6"/>
<g stroke="#d35a22" stroke-width="1.6">
<rect x="1534.6" y="135.3" width="12.6" height="12.8"/>
<rect x="1552.4" y="135.3" width="13.2" height="12.8"/>
<rect x="1534.6" y="153.8" width="12.6" height="12.8"/>
<rect x="1552.4" y="153.8" width="13.2" height="12.8"/>
</g>
<!-- editor -->
<path d="M1645.6,144 H1659.2 A3.8,3.8 0 0 1 1659.2,147.8 H1642.8 Z" fill="#1f5fc0"/>
<rect x="1639" y="140.2" width="23.7" height="7.6" rx="3.8" fill="#1f5fc0"/>
<rect x="1633" y="151.1" width="21.9" height="7.2" rx="3.6" fill="#1f5fc0"/>
<rect x="1625" y="161.4" width="22.6" height="7.3" rx="3.6" fill="#1f5fc0"/>
<path d="M1618.2,172.4 L1621,161.8 L1645.6,131.5 L1652,136.6 L1627.2,167.2 Z" fill="#f4f4f4" stroke="#1f5fc0" stroke-width="1.7" stroke-linejoin="round"/>
<path d="M1644.3,131.2 L1646.4,128.6 A2,2 0 0 1 1649,128.2 L1652.6,131 A2,2 0 0 1 1652.9,133.7 L1650.8,136.3 Z" fill="#1f5fc0"/>
<path d="M1617.4,173.3 L1619.4,166 L1623.8,169.8 Z" fill="#1f5fc0"/>
<!-- copilot -->
<g stroke="#9d9d9d" stroke-width="1.3" stroke-linejoin="round">
<path d="M1708,130.4 H1714.5 C1717.5,130.4 1719.5,133 1720.5,136 L1722,141.3 H1705 Z" fill="#cdcdcd"/>
<path d="M1685,159.8 H1706 L1703,170.8 H1697.5 C1694.5,170.8 1692.8,168 1691.8,165 L1690.5,160 Z" fill="#cdcdcd"/>
<path d="M1692.3,130.4 H1710.3 L1701.8,157 C1701,159 1699.8,160 1697.8,160 H1686 C1683.5,160 1682.2,158 1682.7,155.5 L1687.8,135 C1688.6,132 1690.2,130.4 1692.3,130.4 Z" fill="#ededed"/>
<path d="M1713,141.4 H1726.3 C1728.8,141.4 1730.2,143.6 1729.7,146 L1724.8,166.6 C1724.1,169.1 1722.3,170.8 1719.8,170.8 H1704 Z" fill="#ededed"/>
</g>
<!-- red circle -->
<circle cx="130.3" cy="251.3" r="16.3" stroke="#e5484d" stroke-width="2.9"/>
<circle cx="130.3" cy="252.5" r="18.2" stroke="rgba(0,0,0,0.08)" stroke-width="1.5"/>
</svg>
<svg width="1791" height="869" style="left:0;top:0;z-index:6" viewBox="0 0 1791 869" fill="none">
<defs><linearGradient id="rsh" x1="0" y1="0" x2="0" y2="1"><stop offset="0" stop-color="#d4d4d4"/><stop offset="1" stop-color="#e9e9e9"/></linearGradient></defs>
<rect x="400" y="267" width="1391" height="34" fill="#e9e9e9"/>
<rect x="400" y="267" width="1391" height="3" fill="url(#rsh)"/>
<rect x="400" y="300" width="1391" height="1" fill="#d2d2d2"/>
<rect x="650" y="272" width="1120" height="21.5" fill="#ffffff"/>
<rect x="433.5" y="267" width="1" height="34" fill="#cfcfcf"/>
<path d="M411.3,281.2 H414.5 V287.3 H421 V290.8 H411.3 Z" fill="#555"/>
<rect x="632.08" y="282" width="1" height="3" fill="#6a6a6a"/>
<rect x="614.36" y="280" width="1.2" height="8" fill="#6a6a6a"/>
<rect x="596.84" y="282" width="1" height="3" fill="#6a6a6a"/>
<rect x="579.12" y="280" width="1.2" height="8" fill="#6a6a6a"/>
<rect x="561.60" y="282" width="1" height="3" fill="#6a6a6a"/>
<rect x="543.88" y="280" width="1.2" height="8" fill="#6a6a6a"/>
<rect x="526.36" y="282" width="1" height="3" fill="#6a6a6a"/>
<rect x="508.64" y="280" width="1.2" height="8" fill="#6a6a6a"/>
<rect x="491.12" y="282" width="1" height="3" fill="#6a6a6a"/>
<rect x="473.40" y="280" width="1.2" height="8" fill="#6a6a6a"/>
<rect x="667.32" y="282" width="1" height="3" fill="#6a6a6a"/>
<rect x="684.84" y="280" width="1.2" height="8" fill="#6a6a6a"/>
<rect x="702.56" y="282" width="1" height="3" fill="#6a6a6a"/>
<text x="720.38" y="288.4" text-anchor="middle" font-family="Liberation Sans" font-size="13.4" fill="#555">1</text>
<rect x="737.80" y="282" width="1" height="3" fill="#6a6a6a"/>
<rect x="755.32" y="280" width="1.2" height="8" fill="#6a6a6a"/>
<rect x="773.04" y="282" width="1" height="3" fill="#6a6a6a"/>
<text x="790.86" y="288.4" text-anchor="middle" font-family="Liberation Sans" font-size="13.4" fill="#555">2</text>
<rect x="808.28" y="282" width="1" height="3" fill="#6a6a6a"/>
<rect x="825.80" y="280" width="1.2" height="8" fill="#6a6a6a"/>
<rect x="843.52" y="282" width="1" height="3" fill="#6a6a6a"/>
<text x="861.34" y="288.4" text-anchor="middle" font-family="Liberation Sans" font-size="13.4" fill="#555">3</text>
<rect x="878.76" y="282" width="1" height="3" fill="#6a6a6a"/>
<rect x="896.28" y="280" width="1.2" height="8" fill="#6a6a6a"/>
<rect x="914.00" y="282" width="1" height="3" fill="#6a6a6a"/>
<text x="931.82" y="288.4" text-anchor="middle" font-family="Liberation Sans" font-size="13.4" fill="#555">4</text>
<rect x="949.24" y="282" width="1" height="3" fill="#6a6a6a"/>
<rect x="966.76" y="280" width="1.2" height="8" fill="#6a6a6a"/>
<rect x="984.48" y="282" width="1" height="3" fill="#6a6a6a"/>
<text x="1002.30" y="288.4" text-anchor="middle" font-family="Liberation Sans" font-size="13.4" fill="#555">5</text>
<rect x="1019.72" y="282" width="1" height="3" fill="#6a6a6a"/>
<rect x="1037.24" y="280" width="1.2" height="8" fill="#6a6a6a"/>
<rect x="1054.96" y="282" width="1" height="3" fill="#6a6a6a"/>
<text x="1072.78" y="288.4" text-anchor="middle" font-family="Liberation Sans" font-size="13.4" fill="#555">6</text>
<rect x="1090.20" y="282" width="1" height="3" fill="#6a6a6a"/>
<rect x="1107.72" y="280" width="1.2" height="8" fill="#6a6a6a"/>
<rect x="1125.44" y="282" width="1" height="3" fill="#6a6a6a"/>
<text x="1143.26" y="288.4" text-anchor="middle" font-family="Liberation Sans" font-size="13.4" fill="#555">7</text>
<rect x="1160.68" y="282" width="1" height="3" fill="#6a6a6a"/>
<rect x="1178.20" y="280" width="1.2" height="8" fill="#6a6a6a"/>
<rect x="1195.92" y="282" width="1" height="3" fill="#6a6a6a"/>
<text x="1213.74" y="288.4" text-anchor="middle" font-family="Liberation Sans" font-size="13.4" fill="#555">8</text>
<rect x="1231.16" y="282" width="1" height="3" fill="#6a6a6a"/>
<rect x="1248.68" y="280" width="1.2" height="8" fill="#6a6a6a"/>
<rect x="1266.40" y="282" width="1" height="3" fill="#6a6a6a"/>
<text x="1284.22" y="288.4" text-anchor="middle" font-family="Liberation Sans" font-size="13.4" fill="#555">9</text>
<rect x="1301.64" y="282" width="1" height="3" fill="#6a6a6a"/>
<rect x="1319.16" y="280" width="1.2" height="8" fill="#6a6a6a"/>
<rect x="1336.88" y="282" width="1" height="3" fill="#6a6a6a"/>
<text x="1354.70" y="288.4" text-anchor="middle" font-family="Liberation Sans" font-size="13.4" fill="#555">10</text>
<rect x="1372.12" y="282" width="1" height="3" fill="#6a6a6a"/>
<rect x="1389.64" y="280" width="1.2" height="8" fill="#6a6a6a"/>
<rect x="1407.36" y="282" width="1" height="3" fill="#6a6a6a"/>
<text x="1425.18" y="288.4" text-anchor="middle" font-family="Liberation Sans" font-size="13.4" fill="#555">11</text>
<rect x="1442.60" y="282" width="1" height="3" fill="#6a6a6a"/>
<rect x="1460.12" y="280" width="1.2" height="8" fill="#6a6a6a"/>
<rect x="1477.84" y="282" width="1" height="3" fill="#6a6a6a"/>
<text x="1495.66" y="288.4" text-anchor="middle" font-family="Liberation Sans" font-size="13.4" fill="#555">12</text>
<rect x="1513.08" y="282" width="1" height="3" fill="#6a6a6a"/>
<rect x="1530.60" y="280" width="1.2" height="8" fill="#6a6a6a"/>
<rect x="1548.32" y="282" width="1" height="3" fill="#6a6a6a"/>
<text x="1566.14" y="288.4" text-anchor="middle" font-family="Liberation Sans" font-size="13.4" fill="#555">13</text>
<rect x="1583.56" y="282" width="1" height="3" fill="#6a6a6a"/>
<rect x="1601.08" y="280" width="1.2" height="8" fill="#6a6a6a"/>
<rect x="1618.80" y="282" width="1" height="3" fill="#6a6a6a"/>
<text x="1636.62" y="288.4" text-anchor="middle" font-family="Liberation Sans" font-size="13.4" fill="#555">14</text>
<rect x="1654.04" y="282" width="1" height="3" fill="#6a6a6a"/>
<rect x="1671.56" y="280" width="1.2" height="8" fill="#6a6a6a"/>
<rect x="1689.28" y="282" width="1" height="3" fill="#6a6a6a"/>
<text x="1707.10" y="288.4" text-anchor="middle" font-family="Liberation Sans" font-size="13.4" fill="#555">15</text>
<rect x="1724.52" y="282" width="1" height="3" fill="#6a6a6a"/>
<rect x="1742.04" y="280" width="1.2" height="8" fill="#6a6a6a"/>
<rect x="1759.76" y="282" width="1" height="3" fill="#6a6a6a"/>
<rect x="1777.28" y="280" width="1.2" height="8" fill="#6a6a6a"/>
<path d="M688,269.6 H702.5 V275.4 L695.25,280.6 L688,275.4 Z" fill="#fff" stroke="#7a7a7a" stroke-width="1"/>
<path d="M733,300.5 V289.4 L740.1,284.6 L747.2,289.4 V300.5 Z M733,295 H747.2" fill="#fff" stroke="#7a7a7a" stroke-width="1"/>
<rect x="1770" y="267" width="19" height="34" fill="#dedede"/>
<path d="M1764.6,295.6 V289 L1772.3,284.3 L1780,289 V295.6 Z" fill="#fff" stroke="#6a6a6a" stroke-width="1"/>
<rect x="1788.5" y="267" width="2.5" height="34" fill="#3a3a3a"/>
</svg>
<svg width="1791" height="869" style="left:0;top:0;z-index:3" viewBox="0 0 1791 869" fill="none">
<rect x="741.3" y="625.3" width="714.5" height="57" fill="#c6c6c6"/>
<circle cx="702.1" cy="533.8" r="4.9" fill="#0d0d0d"/>
<circle cx="702.1" cy="571.7" r="4.9" fill="#0d0d0d"/>
<circle cx="702.1" cy="644.4" r="4.9" fill="#0d0d0d"/>
<circle cx="702.1" cy="766" r="4.9" fill="#0d0d0d"/>
<circle cx="702.1" cy="839" r="4.9" fill="#0d0d0d"/>
<rect x="417" y="318.95" width="3" height="1.1" fill="#6a6a6a"/>
<text transform="translate(421.8,337.00) rotate(-90)" text-anchor="middle" font-family="Liberation Sans" font-size="13.4" fill="#555">7</text>
<rect x="417" y="354.05" width="3" height="1.1" fill="#6a6a6a"/>
<rect x="413.8" y="371.50" width="8.6" height="1.2" fill="#6a6a6a"/>
<rect x="417" y="389.15" width="3" height="1.1" fill="#6a6a6a"/>
<text transform="translate(421.8,407.20) rotate(-90)" text-anchor="middle" font-family="Liberation Sans" font-size="13.4" fill="#555">8</text>
<rect x="417" y="424.25" width="3" height="1.1" fill="#6a6a6a"/>
<rect x="413.8" y="441.70" width="8.6" height="1.2" fill="#6a6a6a"/>
<rect x="417" y="459.35" width="3" height="1.1" fill="#6a6a6a"/>
<text transform="translate(421.8,477.40) rotate(-90)" text-anchor="middle" font-family="Liberation Sans" font-size="13.4" fill="#555">9</text>
<rect x="417" y="494.45" width="3" height="1.1" fill="#6a6a6a"/>
<rect x="413.8" y="511.90" width="8.6" height="1.2" fill="#6a6a6a"/>
<rect x="417" y="529.55" width="3" height="1.1" fill="#6a6a6a"/>
<text transform="translate(421.8,547.60) rotate(-90)" text-anchor="middle" font-family="Liberation Sans" font-size="13.4" fill="#555">10</text>
<rect x="417" y="564.65" width="3" height="1.1" fill="#6a6a6a"/>
<rect x="413.8" y="582.10" width="8.6" height="1.2" fill="#6a6a6a"/>
<rect x="417" y="599.75" width="3" height="1.1" fill="#6a6a6a"/>
<text transform="translate(421.8,617.80) rotate(-90)" text-anchor="middle" font-family="Liberation Sans" font-size="13.4" fill="#555">11</text>
<rect x="417" y="634.85" width="3" height="1.1" fill="#6a6a6a"/>
<rect x="413.8" y="652.30" width="8.6" height="1.2" fill="#6a6a6a"/>
<rect x="417" y="669.95" width="3" height="1.1" fill="#6a6a6a"/>
<text transform="translate(421.8,688.00) rotate(-90)" text-anchor="middle" font-family="Liberation Sans" font-size="13.4" fill="#555">12</text>
<rect x="417" y="705.05" width="3" height="1.1" fill="#6a6a6a"/>
<rect x="413.8" y="722.50" width="8.6" height="1.2" fill="#6a6a6a"/>
<rect x="417" y="740.15" width="3" height="1.1" fill="#6a6a6a"/>
<text transform="translate(421.8,758.20) rotate(-90)" text-anchor="middle" font-family="Liberation Sans" font-size="13.4" fill="#555">13</text>
<rect x="417" y="775.25" width="3" height="1.1" fill="#6a6a6a"/>
<rect x="413.8" y="792.70" width="8.6" height="1.2" fill="#6a6a6a"/>
<rect x="417" y="810.35" width="3" height="1.1" fill="#6a6a6a"/>
<text transform="translate(421.8,828.40) rotate(-90)" text-anchor="middle" font-family="Liberation Sans" font-size="13.4" fill="#555">14</text>
<rect x="417" y="845.45" width="3" height="1.1" fill="#6a6a6a"/>
<rect x="413.8" y="862.90" width="8.6" height="1.2" fill="#6a6a6a"/>
<polyline points="309.6,293.2 319.3,303.4 329,293.2" stroke="#333" stroke-width="1.5"/>
<path d="M360.6,291 L375.8,306.2 M375.8,291 L360.6,306.2" stroke="#333" stroke-width="1.5"/>
<rect x="17.7" y="327.7" width="88.4" height="33.3" rx="5" fill="#fff" stroke="#8c8c8c" stroke-width="1"/>
<rect x="121.6" y="327.7" width="86.7" height="33.3" rx="5" fill="#fff" stroke="#8c8c8c" stroke-width="1"/>
<g transform="translate(0,0)">
<path d="M26.8,419.8 H38.5 L43.2,424.5 V436.8 C40,436.8 38,437.5 36,439.5 C35,441.5 33,442 31,442 H26.8 Z" fill="#fff" stroke="#707070" stroke-width="1.2" stroke-linejoin="round"/>
<path d="M38.5,419.8 V424.5 H43.2" fill="#bdbdbd" stroke="#707070" stroke-width="1"/>
<rect x="20.2" y="425" width="13.2" height="13.1" rx="0.6" fill="#1e5ab8"/>
<polyline points="22.2,428.2 23.9,435.3 26.8,430.2 29.7,435.3 31.4,428.2" stroke="#fff" stroke-width="1.4" stroke-linejoin="miter"/>
</g>
<g transform="translate(0,115.4)">
<path d="M26.8,419.8 H38.5 L43.2,424.5 V436.8 C40,436.8 38,437.5 36,439.5 C35,441.5 33,442 31,442 H26.8 Z" fill="#fff" stroke="#707070" stroke-width="1.2" stroke-linejoin="round"/>
<path d="M38.5,419.8 V424.5 H43.2" fill="#bdbdbd" stroke="#707070" stroke-width="1"/>
<rect x="20.2" y="425" width="13.2" height="13.1" rx="0.6" fill="#1e5ab8"/>
<polyline points="22.2,428.2 23.9,435.3 26.8,430.2 29.7,435.3 31.4,428.2" stroke="#fff" stroke-width="1.4" stroke-linejoin="miter"/>
</g>
<g transform="translate(0,219.8)">
<path d="M26.8,419.8 H38.5 L43.2,424.5 V436.8 C40,436.8 38,437.5 36,439.5 C35,441.5 33,442 31,442 H26.8 Z" fill="#fff" stroke="#707070" stroke-width="1.2" stroke-linejoin="round"/>
<path d="M38.5,419.8 V424.5 H43.2" fill="#bdbdbd" stroke="#707070" stroke-width="1"/>
<rect x="20.2" y="425" width="13.2" height="13.1" rx="0.6" fill="#1e5ab8"/>
<polyline points="22.2,428.2 23.9,435.3 26.8,430.2 29.7,435.3 31.4,428.2" stroke="#fff" stroke-width="1.4" stroke-linejoin="miter"/>
</g>
</svg>
</body></html>
